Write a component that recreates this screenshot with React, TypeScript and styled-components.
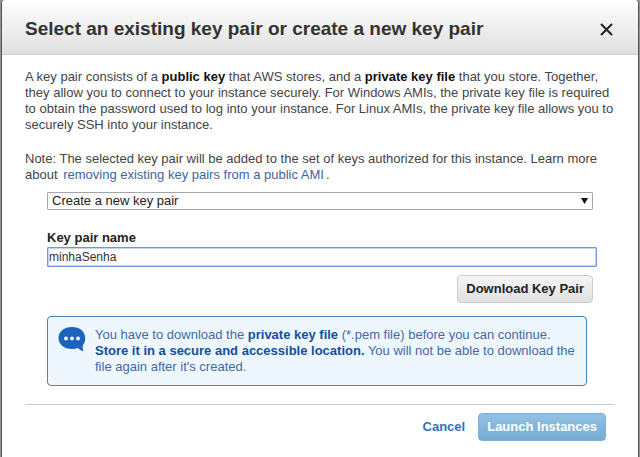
import React, { useState } from "react";
import styled, { createGlobalStyle } from "styled-components";

const GlobalStyle = createGlobalStyle`
  *, *::before, *::after { box-sizing: border-box; }
  body {
    margin: 0;
    background: #929292;
    color: #444;
    font-family: "Liberation Sans", Arial, sans-serif;
    font-size: 13px;
    line-height: 16px;
  }
  button, input, select { font: inherit; }
`;

const Dialog = styled.main`
  min-height: 100vh;
  margin: 0 1px;
  border: solid #555;
  border-width: 0 1px;
  border-radius: 4px 4px 0 0;
  background: #fff;
`;

const Header = styled.header`
  display: flex;
  align-items: center;
  justify-content: space-between;
  height: 55px;
  padding: 4px 23px 0;
  border-bottom: 1px solid #cfcfcf;
  border-radius: 4px 4px 0 0;
  background: linear-gradient(#fff, #dfdfdf);
`;

const Title = styled.h1`
  margin: 0;
  color: #333;
  font-size: 19px;
  line-height: 24px;
`;

const CloseButton = styled.button`
  display: flex;
  padding: 2px;
  border: 0;
  background: none;
  color: #222;
`;

const Content = styled.div`
  padding: 14px 23px 0;
`;

const Intro = styled.div`
  display: flex;
  flex-direction: column;
  gap: 18px;
  margin-bottom: 9px;

  p { margin: 0; }
  b { color: #111; }
`;

const Link = styled.a`
  margin: 0 2px;
  color: #3a66a0;
  text-decoration: none;
`;

const Form = styled.form`
  display: flex;
  flex-direction: column;
  padding: 0 22px;
`;

const SelectBox = styled.div`
  display: grid;
  align-items: center;

  > * { grid-area: 1 / 1; }
  > svg { justify-self: end; margin-right: 5px; pointer-events: none; }
`;

const Select = styled.select`
  width: 100%;
  height: 18px;
  padding: 0 4px;
  border: 1px solid #a6a6a6;
  border-radius: 1px;
  background: #fff;
  color: #222;
  line-height: 16px;
  appearance: none;
`;

const Label = styled.label`
  margin-top: 20px;
  color: #222;
  font-weight: bold;
`;

const TextInput = styled.input`
  height: 20px;
  margin: 1px -4px 0 0;
  padding: 0 1px;
  border: 1px solid #6f96d8;
  border-radius: 1px;
  outline: 0;
  box-shadow: inset 0 0 0 1px #c3d4f2;
  color: #333;
  font-size: 12px;
`;

const Button = styled.button<{ $primary?: boolean }>`
  height: 28px;
  padding: 0 8px;
  border: 1px solid ${(p) => (p.$primary ? "#7fb0d6" : "#ccc")};
  border-radius: 4px;
  background: ${(p) =>
    p.$primary ? "linear-gradient(#90c2e4, #78abd4)" : "linear-gradient(#f5f5f5, #e1e1e1)"};
  color: ${(p) => (p.$primary ? "#fff" : "#222")};
  font-weight: bold;
`;

const DownloadButton = styled(Button)`
  align-self: flex-end;
  margin-top: 8px;
`;

const Notice = styled.section`
  display: flex;
  gap: 9px;
  margin: 13px 6px 0 0;
  padding: 10px;
  border: 1px solid #4586b4;
  border-radius: 4px;
  background: #eff7fe;
  color: #4468a8;

  svg { flex: none; }
  p { margin: 0; }
  b { color: #10509e; }
`;

const Footer = styled.footer`
  display: flex;
  align-items: center;
  justify-content: flex-end;
  gap: 13px;
  margin-top: 18px;
  padding: 8px 9px 16px;
  border-top: 1px solid #ccc;
`;

const CancelLink = styled.a`
  color: #3070c4;
  font-weight: bold;
  text-decoration: none;
`;

export default function App() {
  const [name, setName] = useState("minhaSenha");

  return (
    <>
      <GlobalStyle />
      <Dialog role="dialog" aria-labelledby="dialog-title">
        <Header>
          <Title id="dialog-title">Select an existing key pair or create a new key pair</Title>
          <CloseButton type="button" aria-label="Close">
            <svg width="13" height="13" viewBox="0 0 13 13" fill="none" stroke="currentColor" strokeWidth="2">
              <path d="M1 1l11 11M12 1L1 12" />
            </svg>
          </CloseButton>
        </Header>
        <Content>
          <Intro>
            <p>
              A key pair consists of a <b>public key</b> that AWS stores, and a <b>private key file</b> that you
              store. Together,
              <br />
              they allow you to connect to your instance securely. For Windows AMIs, the private key file is required
              <br />
              to obtain the password used to log into your instance. For Linux AMIs, the private key file allows you to
              <br />
              securely SSH into your instance.
            </p>
            <p>
              Note: The selected key pair will be added to the set of keys authorized for this instance. Learn more
              <br />
              about <Link href="#public-ami">removing existing key pairs from a public AMI</Link>.
            </p>
          </Intro>
          <Form onSubmit={(e) => e.preventDefault()}>
            <SelectBox>
              <Select aria-label="Key pair option">
                <option>Create a new key pair</option>
              </Select>
              <svg width="7" height="6" viewBox="0 0 7 6">
                <path d="M0 0h7L3.500 6z" fill="#111" />
              </svg>
            </SelectBox>
            <Label htmlFor="key-name">Key pair name</Label>
            <TextInput id="key-name" value={name} onChange={(e) => setName(e.target.value)} autoFocus />
            <DownloadButton type="button">Download Key Pair</DownloadButton>
            <Notice>
              <svg width="28" height="25" viewBox="0 0 28 25">
                <path
                  d="M14 0C6.300 0 .500 4.600 .500 11S6.300 22 14 22c2.200 0 4.200-.4 6-1.100 1.600 1.700 3.300 2.700 5.500 3.300-.8-1.700-1-3.600-.6-5.900 1.600-2 2.300-4.400 2.300-7.100C27.200 4.600 21.700 0 14 0z"
                  fill="#1b63bd"
                />
                <g fill="#fff">
                  <circle cx="8" cy="11.500" r="1.900" />
                  <circle cx="14" cy="11.500" r="1.900" />
                  <circle cx="20" cy="11.500" r="1.900" />
                </g>
              </svg>
              <p>
                You have to download the <b>private key file</b> (*.pem file) before you can continue.
                <br />
                <b>Store it in a secure and accessible location.</b> You will not be able to download the
                <br />
                file again after it's created.
              </p>
            </Notice>
          </Form>
          <Footer>
            <CancelLink href="#cancel">Cancel</CancelLink>
            <Button type="button" $primary>
              Launch Instances
            </Button>
          </Footer>
        </Content>
      </Dialog>
    </>
  );
}
